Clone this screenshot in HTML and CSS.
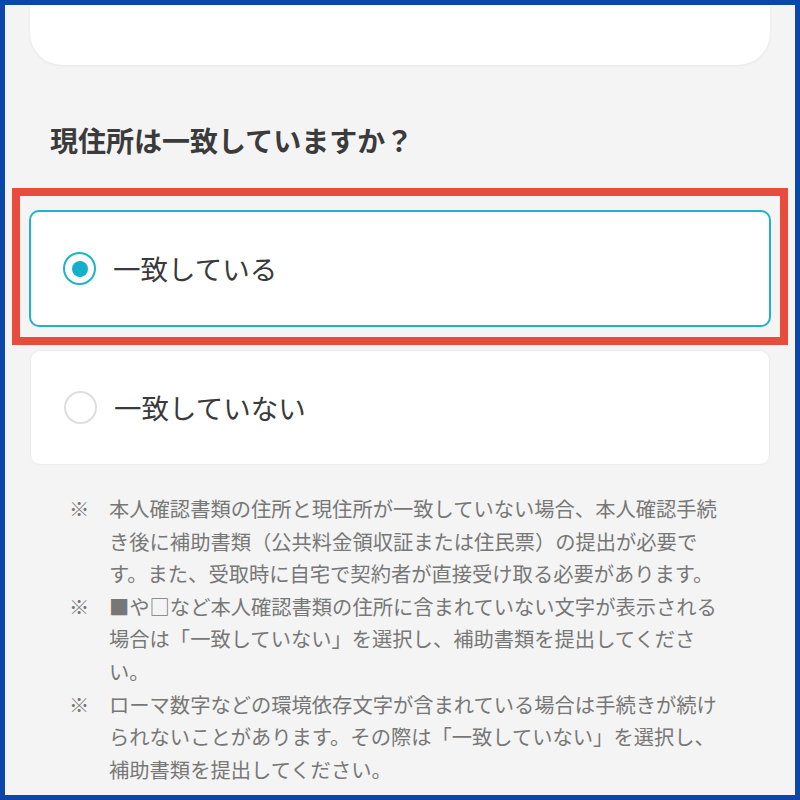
FILE: index.html
```html
<!DOCTYPE html>
<html lang="ja">
<head>
<meta charset="utf-8">
<link rel="stylesheet" href="styles.css">
</head>
<body>
<div class="frame">
  <div class="top-card"></div>
  <h2 class="question">現住所は一致していますか？</h2>
  <div class="highlight">
    <label class="option option-selected">
      <span class="radio radio-on"><span class="dot"></span></span>
      <span class="option-label">一致している</span>
    </label>
  </div>
  <label class="option option-plain">
    <span class="radio"></span>
    <span class="option-label">一致していない</span>
  </label>
  <ul class="notes">
    <li><span class="mark">※</span><span class="note-text">本人確認書類の住所と現住所が一致していない場合、本人確認手続き後に補助書類（公共料金領収証または住民票）の提出が必要です。また、受取時に自宅で契約者が直接受け取る必要があります。</span></li>
    <li><span class="mark">※</span><span class="note-text">■や□など本人確認書類の住所に含まれていない文字が表示される場合は「一致していない」を選択し、補助書類を提出してください。</span></li>
    <li><span class="mark">※</span><span class="note-text">ローマ数字などの環境依存文字が含まれている場合は手続きが続けられないことがあります。その際は「一致していない」を選択し、補助書類を提出してください。</span></li>
  </ul>
</div>
</body>
</html>
```
FILE: styles.css
```css
* { box-sizing: border-box; }
html, body { margin: 0; padding: 0; }
body {
  font-family: "Noto Sans CJK JP", "Noto Sans", sans-serif;
  background: #0b47aa;
}
.frame {
  width: 800px;
  height: 800px;
  border: 5px solid #0b47aa;
  background: #f4f4f4;
  overflow: hidden;
}
.top-card {
  height: 60px;
  margin: 0 25px;
  background: #ffffff;
  border-radius: 0 0 32px 32px;
  box-shadow: 0 1px 3px rgba(0,0,0,0.06);
}
.question {
  margin: 55px 0 0 45px;
  font-size: 28px;
  line-height: 40px;
  font-weight: 700;
  color: #3b3b3b;
}
.highlight {
  margin: 28px 7px 0;
  border: 8px solid #e84c3d;
  padding: 14px 9px 10px;
}
.option {
  display: flex;
  align-items: center;
  gap: 17px;
  height: 116px;
  padding-left: 33px;
  background: #ffffff;
  border-radius: 10px;
}
.option-selected {
  border: 2px solid #1fb3c9;
  padding-left: 32px;
  height: 117px;
}
.option-plain {
  margin: 5px 25px 0;
  border: 1px solid #ececec;
  height: 115px;
}
.radio {
  width: 33px;
  height: 33px;
  border-radius: 50%;
  border: 2px solid #dedede;
  background: #ffffff;
  display: flex;
  align-items: center;
  justify-content: center;
  flex: none;
}
.radio-on { border-color: #1fb3c9; }
.dot {
  width: 16px;
  height: 16px;
  border-radius: 50%;
  background: #12b0cc;
}
.option-label {
  font-size: 27.5px;
  color: #3a3a3a;
  line-height: 1;
}
.notes {
  list-style: none;
  margin: 27px 0 0 64px;
  padding: 0;
  color: #777777;
  font-size: 20.3px;
  line-height: 32.6px;
}
.notes li {
  display: flex;
}
.mark {
  width: 40px;
  flex: none;
}
.note-text {
  width: 620px;
}
```
